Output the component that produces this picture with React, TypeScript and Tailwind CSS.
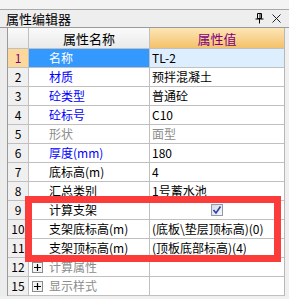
import React from 'react';

type Row = {
    no: string;
    name: React.ReactNode;
    value?: React.ReactNode;
    nameColor?: string;
    valueColor?: string;
    group?: boolean;
};

const rows: Row[] = [
    { no: '2', name: '材质', value: '预拌混凝土', nameColor: 'text-[#0000ff]' },
    { no: '3', name: '砼类型', value: '普通砼', nameColor: 'text-[#0000ff]' },
    { no: '4', name: '砼标号', value: 'C10', nameColor: 'text-[#0000ff]' },
    { no: '5', name: '形状', value: '面型', nameColor: 'text-[#8c8c8c]', valueColor: 'text-[#8c8c8c]' },
    { no: '6', name: '厚度(mm)', value: '180', nameColor: 'text-[#0000ff]' },
    { no: '7', name: '底标高(m)', value: '4' },
    { no: '8', name: '汇总类别', value: '1号蓄水池' },
    { no: '9', name: '计算支架', value: 'check' },
    { no: '10', name: '支架底标高(m)', value: '(底板\\垫层顶标高)(0)' },
    { no: '11', name: '支架顶标高(m)', value: '(顶板底部标高)(4)' },
    { no: '12', name: '计算属性', group: true },
    { no: '15', name: '显示样式', group: true },
];

const font = "font-['Noto_Sans_CJK_SC',sans-serif]";

function PlusBox() {
    return (
        <span className="w-[11px] h-[11px] border border-[#8a8a8a] bg-[#f4f4f4] flex items-center justify-center mr-[6px] shrink-0">
            <svg width="9" height="9" viewBox="0 0 9 9">
                <path d="M1 4.5H8M4.5 1V8" stroke="#000" strokeWidth="1.2" />
            </svg>
        </span>
    );
}

function CheckBox() {
    return (
        <span className="w-[12px] h-[12px] border border-[#8f9cb0] bg-gradient-to-br from-[#d8dce4] to-[#f6f7f9] flex items-center justify-center">
            <svg width="10" height="10" viewBox="0 0 10 10">
                <path d="M1.5 5L4 8L8.5 1.5" stroke="#2a3fa8" strokeWidth="1.6" fill="none" />
            </svg>
        </span>
    );
}

export default function App() {
    return (
        <div className={`relative w-[289px] h-[299px] overflow-hidden bg-[#f0f0f0] text-[12px] leading-none text-black ${font}`}>
            {/* top strip */}
            <div className="h-[10px] bg-[#f3f3f3] border-b border-[#a8a8a8]" />

            {/* title bar */}
            <div className="h-[18px] flex items-center justify-between pl-[6px] pr-[8px] bg-[#eeeeee] border-b border-[#9a9a9a]">
                <span className="text-[13px] font-normal">属性编辑器</span>
                <div className="flex items-center gap-[8px]">
                    <svg width="9" height="11" viewBox="0 0 9 11">
                        <path d="M2.5 0.5H6.5V5.5H2.5Z" fill="none" stroke="#000" />
                        <path d="M5 1V5.5" stroke="#000" />
                        <path d="M0.5 6H8.5" stroke="#000" />
                        <path d="M4.5 6V10.5" stroke="#000" />
                    </svg>
                    <svg width="9" height="9" viewBox="0 0 9 9">
                        <path d="M0.5 0.5L8.5 8.5M8.5 0.5L0.5 8.5" stroke="#222" strokeWidth="1" />
                    </svg>
                </div>
            </div>

            <div className="flex">
                {/* left gutter */}
                <div className="w-[8px] self-stretch border-r border-[#9a9a9a] bg-[#ececec]" />

                {/* grid */}
                <div className="w-[277px] bg-white border-r border-[#b8b8b8]">
                    <div className="grid grid-cols-[21px_121px_134px] h-[21px]">
                        <div className="border-r border-b border-[#c0c0c0] bg-gradient-to-b from-[#fafafa] to-[#eaeaea]" />
                        <div className="border-r border-b border-[#c0c0c0] bg-gradient-to-b from-[#fafafa] to-[#eaeaea] flex items-center justify-center text-[13px]">属性名称</div>
                        <div className="border-b border-[#c0c0c0] bg-gradient-to-b from-[#fde6b6] to-[#f3c168] flex items-center justify-center text-[13px] text-[#800080]">属性值</div>
                    </div>

                    <div className="grid grid-cols-[21px_121px_134px] h-[19px]">
                        <div className="border-r border-b border-[#c0c0c0] bg-[#fcd99a] flex items-center justify-center text-[#800080]">1</div>
                        <div className="border-r border-b border-[#c0c0c0] bg-[#3399ff] text-white flex items-center pl-[20px]">名称</div>
                        <div className="border-b border-[#c0c0c0] bg-[#ddeeff] flex items-center pl-[2px]">TL-2</div>
                    </div>

                    {rows.map(row => (
                        <div key={row.no} className="grid grid-cols-[21px_121px_134px] h-[19px]">
                            <div className="border-r border-b border-[#c0c0c0] bg-[#f0f0f0] flex items-center justify-center overflow-hidden whitespace-nowrap">{row.no}</div>
                            <div className={`border-r border-b border-[#c0c0c0] flex items-center whitespace-nowrap ${row.group ? 'pl-[3px] text-[#8c8c8c]' : 'pl-[20px]'} ${row.nameColor ?? ''}`}>
                                {row.group && <PlusBox />}
                                {row.name}
                            </div>
                            <div className={`border-b border-[#c0c0c0] flex items-center whitespace-nowrap overflow-hidden ${row.value === 'check' ? 'justify-center' : 'pl-[2px]'} ${row.valueColor ?? ''}`}>
                                {row.value === 'check' ? <CheckBox /> : row.value}
                            </div>
                        </div>
                    ))}
                </div>
            </div>

            {/* highlight frame */}
            <div className="absolute left-[25px] top-[196px] w-[256px] h-[66px] border-[7px] border-[#fc3b3b]" />
        </div>
    );
}
